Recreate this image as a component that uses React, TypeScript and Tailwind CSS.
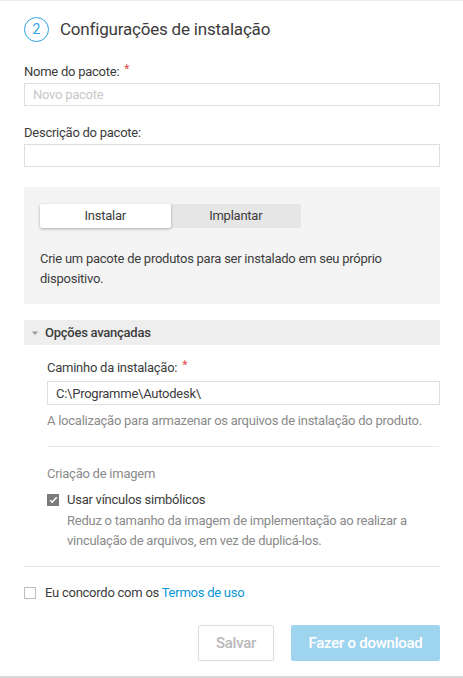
import { useState } from "react"

const font = { fontFamily: 'Roboto, "Noto Sans", sans-serif' }

function Label({ text, required }: { text: string; required?: boolean }) {
  return (
    <div className="text-[13px] leading-[16px] text-[#3c3c3c] flex">
      {text}
      {required && <span className="ml-[5px] text-[#e54a4a] text-[12px] leading-[10px]">*</span>}
    </div>
  )
}

export default function App() {
  const [mode, setMode] = useState("install")
  return (
    <div className="w-[463px] h-[678px] bg-white border-t border-[#e8ebee] border-b-2 border-b-[#d9d9d9] overflow-hidden tracking-[-0.25px]" style={font}>
      <div className="px-6">
        <div className="flex items-center gap-[11px] pt-4">
          <div className="w-[25px] h-[25px] rounded-full border-[1.5px] border-[#2ea3e3] flex items-center justify-center text-[14px] text-[#2ea3e3] tracking-normal">
            2
          </div>
          <h1 className="text-[17px] leading-[25px] text-[#3c3c3c] tracking-[-0.2px]">Configurações de instalação</h1>
        </div>

        <div className="mt-[22px]">
          <Label text="Nome do pacote:" required />
          <input
            className="mt-[3px] block w-[416px] h-[23px] border border-[#dedede] px-2 text-[13px] text-[#3c3c3c] placeholder:text-[#c8c8c8] outline-none"
            placeholder="Novo pacote"
          />
        </div>

        <div className="mt-[19px]">
          <Label text="Descrição do pacote:" />
          <input className="mt-[3px] block w-[416px] h-[23px] border border-[#dedede] px-2 text-[13px] outline-none" />
        </div>

        <div className="mt-[20px] w-[416px] bg-[#f4f4f4] px-4 pt-[17px] pb-[15px]">
          <div className="flex w-[261px] h-[24px] bg-[#e6e6e6] rounded-[2px] text-[13px] text-[#3c3c3c]">
            <button
              onClick={() => setMode("install")}
              className={`flex-1 rounded-[2px] ${mode === "install" ? "bg-white shadow-[0_1px_3px_rgba(0,0,0,0.3)]" : ""}`}
            >
              Instalar
            </button>
            <button
              onClick={() => setMode("deploy")}
              className={`flex-1 rounded-[2px] ${mode === "deploy" ? "bg-white shadow-[0_1px_3px_rgba(0,0,0,0.3)]" : ""}`}
            >
              Implantar
            </button>
          </div>
          <p className="mt-[21px] text-[13px] leading-[20px] text-[#3c3c3c]">
            Crie um pacote de produtos para ser instalado em seu próprio dispositivo.
          </p>
        </div>

        <div className="mt-[16px] w-[416px] h-[25px] bg-[#eeeeee] flex items-center pl-[7px] gap-[6px]">
          <svg width="8" height="6" viewBox="0 0 8 6">
            <path d="M1 1.5h6L4 5z" fill="#9a9a9a" />
          </svg>
          <span className="text-[13px] font-medium text-[#3c3c3c]">Opções avançadas</span>
        </div>

        <div className="pl-[23px] pt-[15px]">
          <Label text="Caminho da instalação:" required />
          <input
            className="mt-[5px] block w-[393px] h-[24px] border border-[#dedede] px-2 text-[13px] text-[#3c3c3c] outline-none tracking-[-0.25px]"
            defaultValue="C:\Programme\Autodesk\"
          />
          <p className="mt-[8px] text-[13px] leading-[16px] text-[#8a8a8a]">
            A localização para armazenar os arquivos de instalação do produto.
          </p>
          <div className="mt-[17px] h-px bg-[#e8e8e8]" />
          <p className="mt-[19px] text-[13px] leading-[16px] text-[#8a8a8a]">Criação de imagem</p>
          <div className="mt-[10px] flex gap-[8px]">
            <div className="mt-[2px] w-[12px] h-[12px] bg-[#7a7a7a] flex items-center justify-center shrink-0">
              <svg width="9" height="8" viewBox="0 0 9 8">
                <path d="M1.2 4.2l2 2 4.5-5" fill="none" stroke="white" strokeWidth="1.6" />
              </svg>
            </div>
            <div>
              <div className="text-[13px] leading-[16px] text-[#3c3c3c]">Usar vínculos simbólicos</div>
              <p className="mt-[3px] text-[13px] leading-[20px] text-[#8a8a8a]">
                Reduz o tamanho da imagem de implementação ao realizar a vinculação de arquivos, em vez de duplicá-los.
              </p>
            </div>
          </div>
        </div>

        <div className="mt-[15px] w-[416px] h-px bg-[#e8e8e8]" />

        <div className="mt-[18px] flex items-center gap-[9px] h-[16px]">
          <div className="w-[12px] h-[12px] border border-[#bdbdbd] bg-white" />
          <span className="text-[13px] leading-[16px] text-[#3c3c3c]">
            Eu concordo com os <a className="text-[#0696d7]">Termos de uso</a>
          </span>
        </div>

        <div className="mt-[24px] w-[416px] flex justify-end gap-[17px]">
          <button className="w-[76px] h-[36px] border border-[#dcdcdc] rounded-[2px] text-[15px] font-medium text-[#b8b8b8]">
            Salvar
          </button>
          <button className="w-[149px] h-[36px] rounded-[2px] bg-[#9fd4ef] text-[15px] font-medium text-white">
            Fazer o download
          </button>
        </div>
      </div>
    </div>
  )
}
